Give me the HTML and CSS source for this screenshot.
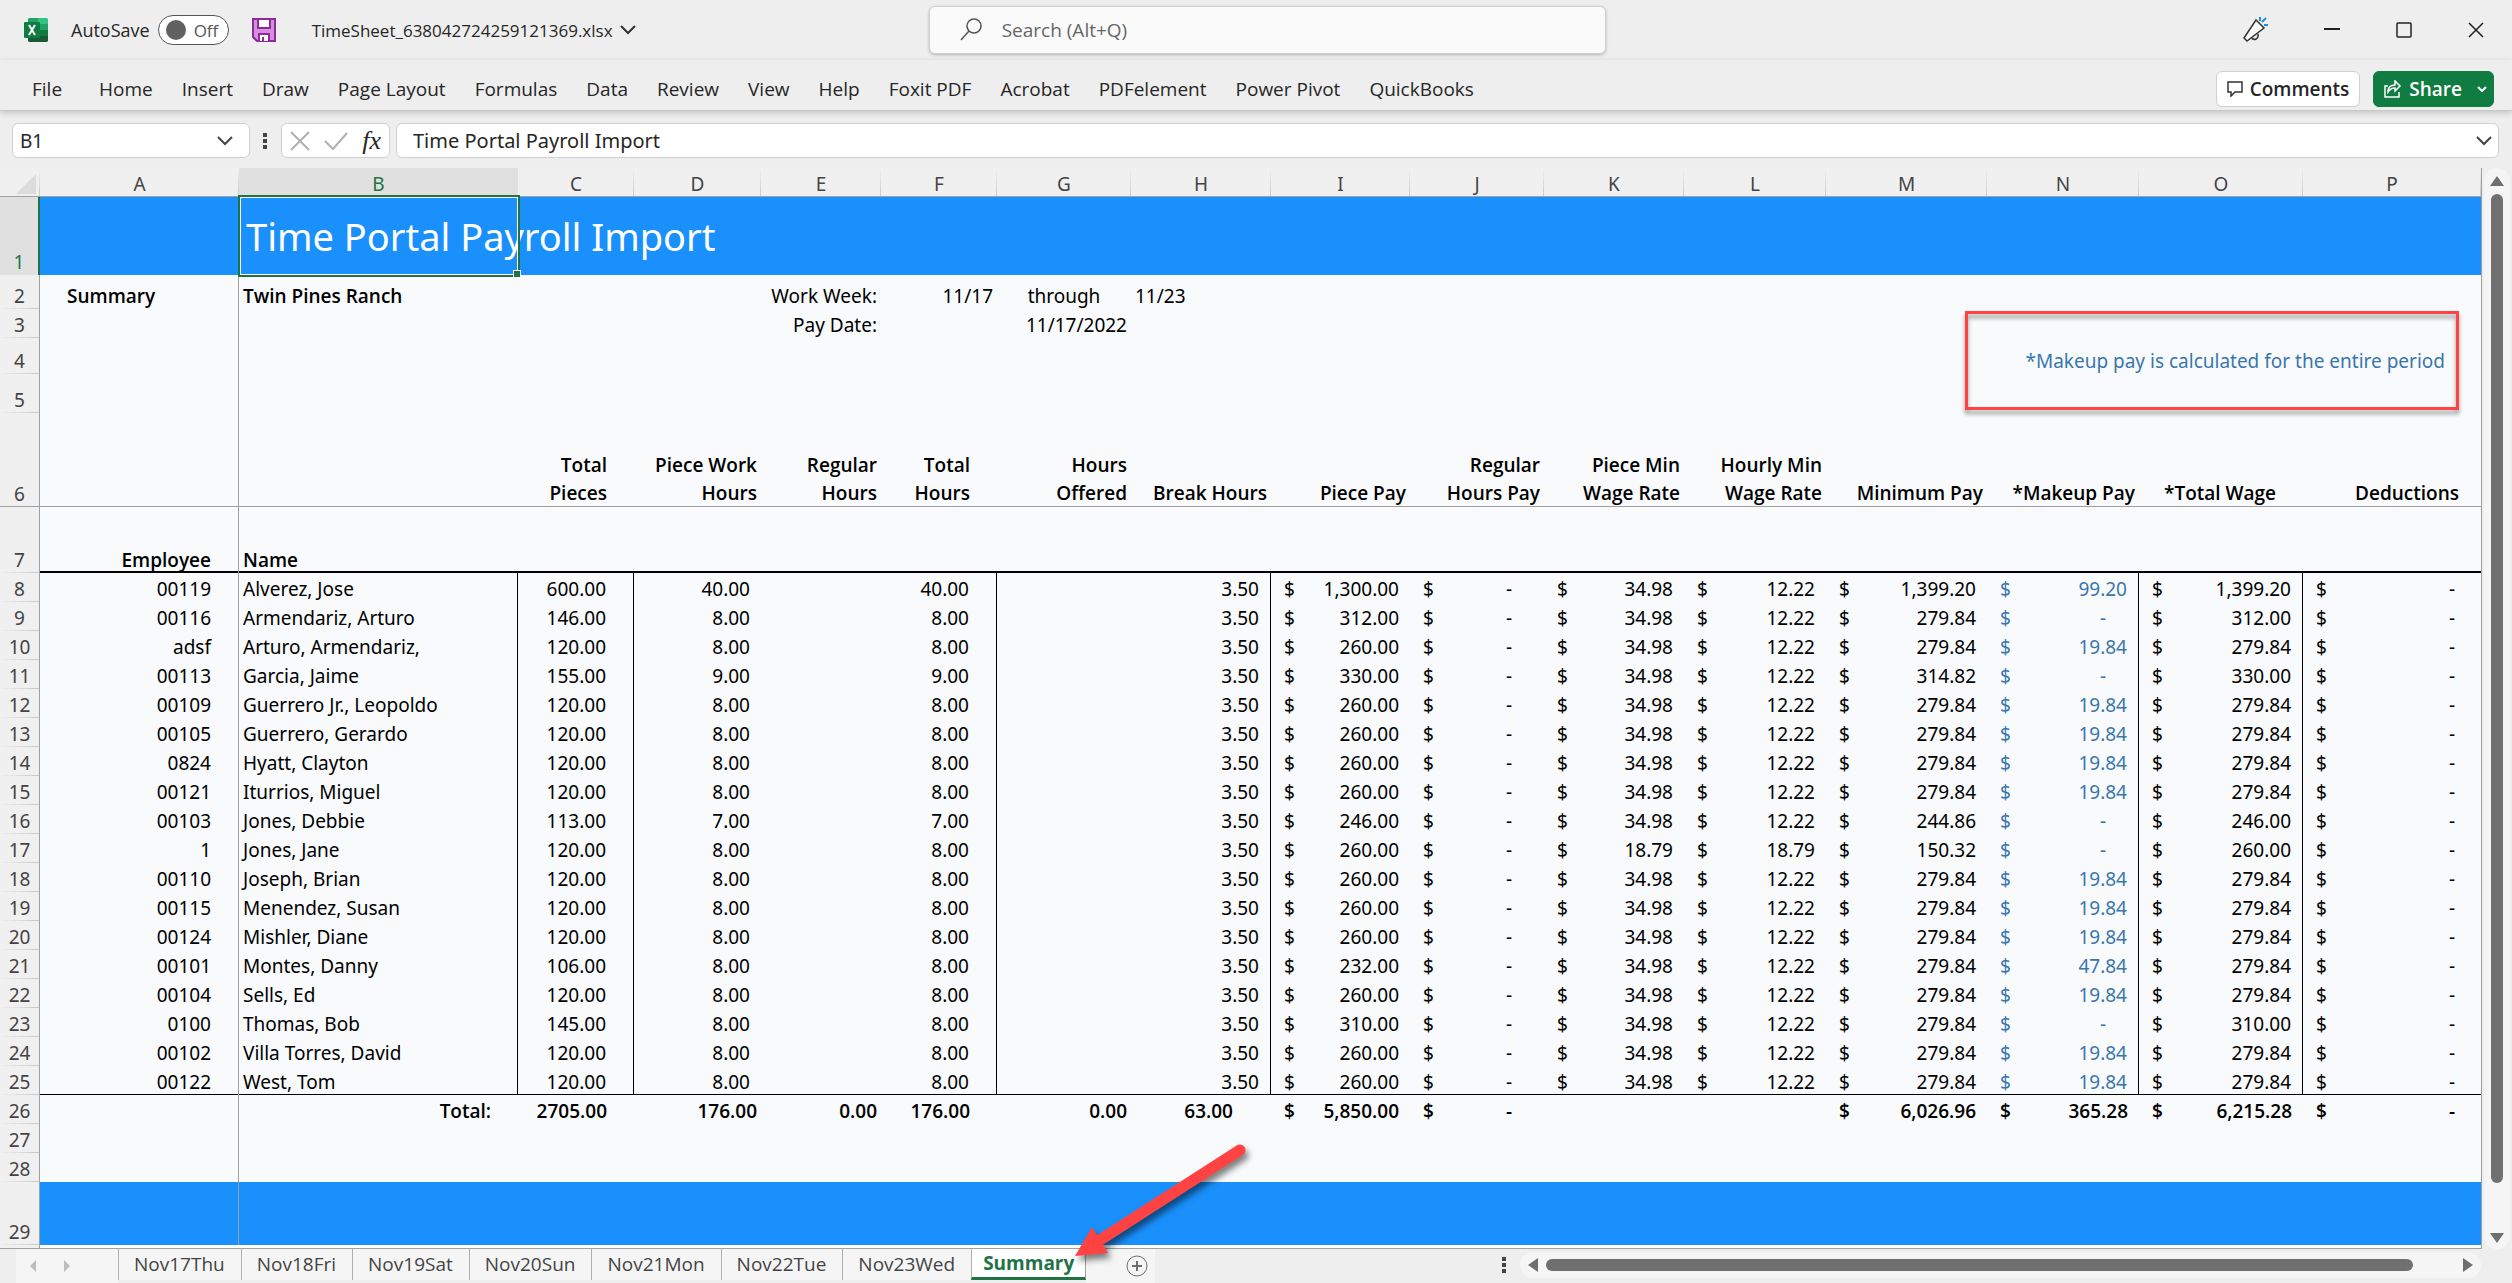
FILE: index.html
```html
<!DOCTYPE html>
<html lang="en">
<head>
    <meta charset="UTF-8">
    <title>TimeSheet_638042724259121369.xlsx</title>
    <meta name="viewport" content="width=device-width, initial-scale=1.0">
    <link rel="stylesheet" href="styles.css">
</head>
<body>

<header class="titlebar">
    <div class="title-left">
        <svg class="app-icon" width="24" height="24" viewBox="0 0 24 24" aria-hidden="true">
            <path fill="#21a366" d="M5 0h10v6H4V1z"/>
            <path fill="#33c481" d="M14 0h9l1 1v5H14z"/>
            <path fill="#107c41" d="M4 6h10v6H4z"/>
            <path fill="#21a366" d="M14 6h10v6H14z"/>
            <path fill="#185c37" d="M4 12h10v6h10v5l-1 1H5l-1-1z"/>
            <path fill="#107c41" d="M14 12h10v6H14z"/>
            <rect y="4" width="16" height="16" rx="1" fill="#107c41"/>
            <path stroke="#fff" stroke-width="2" d="M5 7l6 10M11 7L5 17"/>
        </svg>
        <label class="autosave">AutoSave
            <span class="toggle"><input type="checkbox"><span class="knob"></span>Off</span>
        </label>
        <button class="plain save" aria-label="Save">
            <svg width="24" height="24" viewBox="0 0 24 24" fill="none">
                <path fill="#d58fdd" stroke="#8e2a9b" stroke-width="2" d="M1 1h22v22H5l-4-4z"/>
                <path fill="#fff" stroke="#8e2a9b" stroke-width="2" d="M6 1h12v9H6zM7 23v-7h10v7"/>
                <path stroke="#8e2a9b" stroke-width="2" d="M11 19v4"/>
            </svg>
        </button>
        <button class="plain filename">TimeSheet_638042724259121369.xlsx
            <svg width="16" height="10" viewBox="0 0 16 10" fill="none" stroke="#333" stroke-width="2"><path d="M1 1l7 7 7-7"/></svg>
        </button>
    </div>
    <label class="search">
        <svg width="22" height="24" viewBox="0 0 22 24" fill="none" stroke="#555" stroke-width="1.500"><circle cx="14" cy="8" r="7"/><path d="M9 13l-8 9"/></svg>
        <input type="text" placeholder="Search (Alt+Q)" aria-label="Search">
    </label>
    <div class="window-buttons">
        <button class="plain" aria-label="Coming soon">
            <svg width="26" height="26" viewBox="0 0 26 26" fill="none" stroke="#333" stroke-width="1.500">
                <path fill="#fafafa" d="M14 3l8 8L5 24l-3-3z"/><path d="M10 21c2 3 7 1 6-4"/><path stroke="#1e8fd8" stroke-width="2" d="M18 4V0M20 5l4-4M22 8h4"/>
            </svg>
        </button>
        <button class="plain" aria-label="Minimize"><svg width="16" height="16" viewBox="0 0 16 16" stroke="#222" stroke-width="2"><path d="M0 7h16"/></svg></button>
        <button class="plain" aria-label="Maximize"><svg width="16" height="16" viewBox="0 0 16 16" fill="none" stroke="#222" stroke-width="1.500"><rect x="1" y="1" width="14" height="14" rx="1"/></svg></button>
        <button class="plain" aria-label="Close"><svg width="16" height="16" viewBox="0 0 16 16" stroke="#222" stroke-width="1.500"><path d="M1 1l14 14M15 1L1 15"/></svg></button>
    </div>
</header>

<nav class="ribbon">
    <a class="file" href="#">File</a>
    <a href="#">Home</a>
    <a href="#">Insert</a>
    <a href="#">Draw</a>
    <a href="#">Page Layout</a>
    <a href="#">Formulas</a>
    <a href="#">Data</a>
    <a href="#">Review</a>
    <a href="#">View</a>
    <a href="#">Help</a>
    <a href="#">Foxit PDF</a>
    <a href="#">Acrobat</a>
    <a href="#">PDFelement</a>
    <a href="#">Power Pivot</a>
    <a href="#">QuickBooks</a>
    <button class="comments">
        <svg width="16" height="16" viewBox="0 0 16 16" fill="none" stroke="#333" stroke-width="1.500"><path d="M1 1h14v10H8l-4 4v-4H1z"/></svg>
        Comments
    </button>
    <button class="share">
        <svg width="18" height="18" viewBox="0 0 18 18" fill="none" stroke="#fff" stroke-width="1.500"><path d="M4 6H1v11h14v-5M4 12c0-5 3-7 7-7V1l5 5-5 5V8c-3 0-5 1-7 4z"/></svg>
        Share
        <svg class="caret" width="10" height="6" viewBox="0 0 10 6" fill="none" stroke="#fff" stroke-width="2"><path d="M1 1l4 4 4-4"/></svg>
    </button>
</nav>

<div class="formula-bar">
    <div class="box name-box">
        <input type="text" value="B1" aria-label="Name box">
        <button class="plain" aria-label="Open name list"><svg width="16" height="10" viewBox="0 0 16 10" fill="none" stroke="#444" stroke-width="2"><path d="M1 1l7 7 7-7"/></svg></button>
    </div>
    <svg class="dots" width="4" height="16" viewBox="0 0 4 16" fill="#444"><path d="M0 0h4v4H0zM0 6h4v4H0zM0 12h4v4H0z"/></svg>
    <div class="box fx-box">
        <button class="plain" aria-label="Cancel"><svg width="20" height="20" viewBox="0 0 20 20" stroke="#b0b0b0" stroke-width="2"><path d="M1 1l18 18M19 1L1 19"/></svg></button>
        <button class="plain" aria-label="Enter"><svg width="24" height="18" viewBox="0 0 24 18" fill="none" stroke="#b0b0b0" stroke-width="2"><path d="M1 9l8 8L23 1"/></svg></button>
        <button class="plain fx" aria-label="Insert function">fx</button>
    </div>
    <div class="box formula-box">
        <input type="text" value="Time Portal Payroll Import" aria-label="Formula">
        <button class="plain" aria-label="Expand formula bar"><svg width="16" height="10" viewBox="0 0 16 10" fill="none" stroke="#444" stroke-width="2"><path d="M1 1l7 7 7-7"/></svg></button>
    </div>
</div>

<main class="workspace">
    <div class="sheet">
        <table>
            <colgroup>
                <col class="col-head"><col class="col-a"><col class="col-b"><col class="col-c"><col class="col-d"><col class="col-e"><col class="col-f"><col class="col-g"><col class="col-h"><col class="col-i"><col class="col-j"><col class="col-k"><col class="col-l"><col class="col-m"><col class="col-n"><col class="col-o"><col class="col-p">
            </colgroup>
            <thead>
                <tr>
                    <th class="corner"><svg width="20" height="20" viewBox="0 0 20 20" fill="#dcdcdc"><path d="M20 0v20H0z"/></svg></th>
                    <th>A</th><th class="picked">B</th><th>C</th><th>D</th><th>E</th><th>F</th><th>G</th><th>H</th><th>I</th><th>J</th><th>K</th><th>L</th><th>M</th><th>N</th><th>O</th><th>P</th>
                </tr>
            </thead>
            <tbody>
                <tr class="banner">
                    <th class="picked">1</th>
                    <td class="a"></td>
                    <td class="title">Time Portal Payroll Import<span class="selection"></span></td>
                    <td colspan="14"></td>
                </tr>
                <tr class="row-2">
                    <th>2</th>
                    <td class="a bold indent">Summary</td>
                    <td class="text bold">Twin Pines Ranch</td>
                    <td></td><td></td>
                    <td>Work Week:</td>
                    <td>11/17</td>
                    <td class="center">through</td>
                    <td class="text">11/23</td>
                    <td colspan="8"></td>
                </tr>
                <tr>
                    <th>3</th>
                    <td class="a"></td><td></td><td></td><td></td>
                    <td>Pay Date:</td>
                    <td></td>
                    <td>11/17/2022</td>
                    <td colspan="9"></td>
                </tr>
                <tr class="row-4">
                    <th>4</th>
                    <td class="a"></td>
                    <td colspan="12"></td>
                    <td colspan="3" class="note">*Makeup pay is calculated for the entire period<span class="callout"></span></td>
                </tr>
                <tr class="row-5"><th>5</th><td class="a"></td><td colspan="15"></td></tr>
                <tr class="row-6 bold">
                    <th>6</th>
                    <td class="a"></td><td></td>
                    <td class="wide">Total<br>Pieces</td>
                    <td>Piece Work<br>Hours</td>
                    <td>Regular<br>Hours</td>
                    <td class="wide">Total<br>Hours</td>
                    <td>Hours<br>Offered</td>
                    <td>Break Hours</td>
                    <td>Piece Pay</td>
                    <td>Regular<br>Hours Pay</td>
                    <td>Piece Min<br>Wage Rate</td>
                    <td>Hourly Min<br>Wage Rate</td>
                    <td>Minimum Pay</td>
                    <td>*Makeup Pay</td>
                    <td class="wide">*Total Wage</td>
                    <td class="last">Deductions</td>
                </tr>
                <tr class="row-7 bold">
                    <th>7</th>
                    <td class="a wide">Employee</td>
                    <td class="text">Name</td>
                    <td colspan="14"></td>
                </tr>
            </tbody>
            <tbody id="employees"></tbody>
            <tbody>
                <tr class="bold">
                    <th>26</th>
                    <td class="a"></td>
                    <td class="wide">Total:</td>
                    <td class="wide">2705.00</td>
                    <td>176.00</td>
                    <td>0.00</td>
                    <td class="wide">176.00</td>
                    <td>0.00</td>
                    <td class="breaks">63.00</td>
                    <td class="money"><span>$</span>5,850.00</td>
                    <td class="money dash"><span>$</span>-</td>
                    <td></td><td></td>
                    <td class="money"><span>$</span>6,026.96</td>
                    <td class="money"><span>$</span>365.28</td>
                    <td class="money"><span>$</span>6,215.28</td>
                    <td class="money last"><span>$</span>-</td>
                </tr>
                <tr><th>27</th><td class="a"></td><td colspan="15"></td></tr>
                <tr><th>28</th><td class="a"></td><td colspan="15"></td></tr>
                <tr class="banner footer"><th>29</th><td class="a"></td><td colspan="15"></td></tr>
            </tbody>
        </table>
    </div>
    <div class="scroll-v">
        <svg width="14" height="10" viewBox="0 0 14 10" fill="#6e6e6e"><path d="M7 0l7 10H0z"/></svg>
        <div class="thumb"></div>
        <svg width="14" height="10" viewBox="0 0 14 10" fill="#6e6e6e"><path d="M0 0h14L7 10z"/></svg>
    </div>
</main>

<footer class="tabbar">
    <div class="tab-nav">
        <button class="plain" aria-label="Previous sheet"><svg width="6" height="12" viewBox="0 0 6 12" fill="#bdbdbd"><path d="M6 0v12L0 6z"/></svg></button>
        <button class="plain" aria-label="Next sheet"><svg width="6" height="12" viewBox="0 0 6 12" fill="#bdbdbd"><path d="M0 0v12l6-6z"/></svg></button>
    </div>
    <button class="tab">Nov17Thu</button>
    <button class="tab">Nov18Fri</button>
    <button class="tab">Nov19Sat</button>
    <button class="tab">Nov20Sun</button>
    <button class="tab">Nov21Mon</button>
    <button class="tab">Nov22Tue</button>
    <button class="tab">Nov23Wed</button>
    <button class="tab active">Summary</button>
    <button class="plain add-sheet" aria-label="New sheet">
        <svg width="24" height="24" viewBox="0 0 24 24" fill="none" stroke="#6e6e6e"><circle cx="12" cy="12" r="10"/><path stroke-width="2" d="M7 12h10M12 7v10"/></svg>
    </button>
    <svg class="dots" width="4" height="16" viewBox="0 0 4 16" fill="#444"><path d="M0 0h4v4H0zM0 6h4v4H0zM0 12h4v4H0z"/></svg>
    <div class="scroll-h">
        <svg width="10" height="14" viewBox="0 0 10 14" fill="#6e6e6e"><path d="M10 0v14L0 7z"/></svg>
        <div class="thumb"></div>
        <svg width="10" height="14" viewBox="0 0 10 14" fill="#6e6e6e"><path d="M0 0v14l10-7z"/></svg>
    </div>
    <svg class="arrow" width="190" height="130" viewBox="0 0 190 130">
        <path fill="#ff4343" d="M5 123l17-29 16 26z"/>
        <path stroke="#ff4343" stroke-width="11" stroke-linecap="round" d="M30 107l140-90"/>
    </svg>
</footer>

<script>
// id, name, pieces, hours, piece pay, piece min, hourly min, minimum pay, makeup, total wage
const employees = [
    ["00119", "Alverez, Jose", "600.00", "40.00", "1,300.00", "34.98", "12.22", "1,399.20", "99.20", "1,399.20"],
    ["00116", "Armendariz, Arturo", "146.00", "8.00", "312.00", "34.98", "12.22", "279.84", "-", "312.00"],
    ["adsf", "Arturo, Armendariz,", "120.00", "8.00", "260.00", "34.98", "12.22", "279.84", "19.84", "279.84"],
    ["00113", "Garcia, Jaime", "155.00", "9.00", "330.00", "34.98", "12.22", "314.82", "-", "330.00"],
    ["00109", "Guerrero Jr., Leopoldo", "120.00", "8.00", "260.00", "34.98", "12.22", "279.84", "19.84", "279.84"],
    ["00105", "Guerrero, Gerardo", "120.00", "8.00", "260.00", "34.98", "12.22", "279.84", "19.84", "279.84"],
    ["0824", "Hyatt, Clayton", "120.00", "8.00", "260.00", "34.98", "12.22", "279.84", "19.84", "279.84"],
    ["00121", "Iturrios, Miguel", "120.00", "8.00", "260.00", "34.98", "12.22", "279.84", "19.84", "279.84"],
    ["00103", "Jones, Debbie", "113.00", "7.00", "246.00", "34.98", "12.22", "244.86", "-", "246.00"],
    ["1", "Jones, Jane", "120.00", "8.00", "260.00", "18.79", "18.79", "150.32", "-", "260.00"],
    ["00110", "Joseph, Brian", "120.00", "8.00", "260.00", "34.98", "12.22", "279.84", "19.84", "279.84"],
    ["00115", "Menendez, Susan", "120.00", "8.00", "260.00", "34.98", "12.22", "279.84", "19.84", "279.84"],
    ["00124", "Mishler, Diane", "120.00", "8.00", "260.00", "34.98", "12.22", "279.84", "19.84", "279.84"],
    ["00101", "Montes, Danny", "106.00", "8.00", "232.00", "34.98", "12.22", "279.84", "47.84", "279.84"],
    ["00104", "Sells, Ed", "120.00", "8.00", "260.00", "34.98", "12.22", "279.84", "19.84", "279.84"],
    ["0100", "Thomas, Bob", "145.00", "8.00", "310.00", "34.98", "12.22", "279.84", "-", "310.00"],
    ["00102", "Villa Torres, David", "120.00", "8.00", "260.00", "34.98", "12.22", "279.84", "19.84", "279.84"],
    ["00122", "West, Tom", "120.00", "8.00", "260.00", "34.98", "12.22", "279.84", "19.84", "279.84"]
];

function money(value, extra = "") {
    const dash = value === "-" ? "dash" : "";
    return `<td class="money ${dash} ${extra}"><span>$</span>${value}</td>`;
}

document.getElementById("employees").innerHTML = employees.map((e, i) => `
    <tr>
        <th>${i + 8}</th>
        <td class="a wide">${e[0]}</td>
        <td class="text line">${e[1]}</td>
        <td class="wide line">${e[2]}</td>
        <td class="num">${e[3]}</td>
        <td></td>
        <td class="wide line">${e[3]}</td>
        <td></td>
        <td class="num line">3.50</td>
        ${money(e[4])}
        ${money("-")}
        ${money(e[5])}
        ${money(e[6])}
        ${money(e[7])}
        ${money(e[8], "makeup line")}
        ${money(e[9], "line")}
        ${money("-", "last")}
    </tr>`).join("");
</script>

</body>
</html>
```

FILE: styles.css
```css
* {
    box-sizing: border-box;
}

body {
    margin: 0;
    height: 100vh;
    display: flex;
    flex-direction: column;
    overflow: hidden;
    background: #eeeeee;
    color: #262626;
    font-family: 'Open Sans', 'Noto Sans', sans-serif;
    font-size: 19px;
}

button, input {
    font: inherit;
    color: inherit;
}

svg {
    flex: none;
    display: block;
}

.plain {
    display: flex;
    align-items: center;
    padding: 0;
    border: none;
    background: none;
}

/* title bar */
.titlebar {
    display: grid;
    grid-template-columns: 103fr 677px 100fr;
    align-items: center;
    height: 60px;
    padding: 0 28px 0 24px;
}

.title-left {
    display: flex;
    align-items: center;
}

.autosave {
    display: flex;
    align-items: center;
    gap: 8px;
    margin-left: 23px;
    font-size: 18px;
}

.toggle {
    display: flex;
    align-items: center;
    gap: 8px;
    width: 71px;
    height: 30px;
    padding-left: 7px;
    border: 1px solid #555;
    border-radius: 15px;
    background: #fff;
    color: #555;
    font-size: 17px;
}

.toggle input {
    position: absolute;
    opacity: 0;
}

.knob {
    width: 20px;
    height: 20px;
    border-radius: 50%;
    background: #616161;
}

.save {
    margin: 0 36px 0 23px;
}

.filename {
    gap: 7px;
    font-size: 17px;
}

.search {
    display: flex;
    align-items: center;
    gap: 20px;
    height: 48px;
    padding: 0 30px;
    border: 1px solid #d0d0d0;
    border-radius: 6px;
    background: #fafafa;
    box-shadow: 0 1px 3px rgba(0, 0, 0, 0.25);
}

.search input {
    flex: 1;
    border: none;
    background: none;
    padding: 0;
}

.search input::placeholder {
    color: #666;
    opacity: 1;
}

.window-buttons {
    display: flex;
    align-items: center;
    justify-content: flex-end;
    gap: 56px;
}

/* ribbon */
.ribbon {
    display: flex;
    align-items: center;
    gap: 29px;
    height: 51px;
    padding: 7px 18px 0 32px;
    border-bottom: 1px solid #c8c8c8;
    box-shadow: 0 2px 6px rgba(0, 0, 0, 0.18);
}

.ribbon a {
    color: #262626;
    text-decoration: none;
    white-space: nowrap;
}

.ribbon .file {
    margin-right: 8px;
}

.comments, .share {
    display: flex;
    align-items: center;
    gap: 7px;
    height: 36px;
    padding: 0 10px;
    border: 1px solid #d0d0d0;
    border-radius: 6px;
    background: #fff;
    font-weight: 600;
}

.comments {
    margin-left: auto;
}

.share {
    margin-left: -16px;
    padding: 0 6px 0 10px;
    border-color: #107c41;
    background: #107c41;
    color: #fff;
}

.caret {
    margin-left: 8px;
}

/* formula bar */
.formula-bar {
    display: flex;
    align-items: center;
    height: 57px;
    padding: 2px 13px 0 12px;
}

.box {
    display: flex;
    align-items: center;
    height: 35px;
    border: 1px solid #d0d0d0;
    border-radius: 6px;
    background: #fff;
}

.box input {
    flex: 1;
    min-width: 0;
    padding: 0;
    border: none;
    background: none;
    font-family: 'Noto Sans', sans-serif;
}

.formula-box input {
    font-size: 20px;
}

.name-box {
    width: 238px;
    padding: 0 16px 0 7px;
}

.formula-bar .dots {
    margin: 0 14px 0 13px;
}

.fx-box {
    width: 109px;
    justify-content: space-between;
    padding: 0 8px;
    margin-right: 6px;
}

.fx {
    font-family: 'Liberation Serif', serif;
    font-style: italic;
    font-size: 26px;
    line-height: 28px;
}

.formula-box {
    flex: 1;
    padding: 0 6px 0 16px;
}

/* grid */
.workspace {
    flex: 1;
    min-height: 0;
    display: flex;
}

.sheet {
    flex: 1;
    overflow: hidden;
    background: linear-gradient(to right, #f0f0f0 39px, #a0a0a0 39px, #a0a0a0 40px, #fff 40px);
    border-right: 1px solid #a0a0a0;
    border-bottom: 1px solid #a0a0a0;
}

table {
    width: 100%;
    table-layout: fixed;
    border-collapse: separate;
    border-spacing: 0;
    font-family: 'Noto Sans', sans-serif;
    line-height: 25px;
}

.col-head { width: 40px; }
.col-a { width: 199px; }
.col-b { width: 279px; }
.col-c { width: 116px; }
.col-d { width: 127px; }
.col-e { width: 120px; }
.col-f { width: 116px; }
.col-g { width: 134px; }
.col-h { width: 140px; }
.col-i { width: 139px; }
.col-j { width: 134px; }
.col-k { width: 140px; }
.col-l { width: 142px; }
.col-m { width: 161px; }
.col-n { width: 152px; }
.col-o { width: 164px; }
.col-p { width: 178px; }

th {
    padding: 0;
    height: 29px;
    color: #444;
    font-weight: normal;
}

thead th {
    padding-top: 3px;
    background: linear-gradient(#f0f0f0, #c8c8c8) right / 1px 100% no-repeat #f0f0f0;
    box-shadow: inset 0 -1px #a0a0a0;
}

thead .picked {
    background: #e0e0e0;
    color: #217346;
}

.corner svg {
    margin-left: 16px;
}

tbody th {
    vertical-align: bottom;
    border-right: 1px solid #a0a0a0;
    background: linear-gradient(to right, #f0f0f0, #c8c8c8) bottom / 100% 1px no-repeat #f0f0f0;
}

tbody .picked {
    border-right: 2px solid #217346;
    background: #e0e0e0;
    color: #217346;
}

td {
    height: 29px;
    padding: 0 4px;
    background: #f8fafc;
    color: #000;
    text-align: right;
    vertical-align: bottom;
    white-space: nowrap;
}

.bold td, td.bold {
    font-family: 'Open Sans', sans-serif;
    font-weight: 600;
}

.text { text-align: left; }
.center { text-align: center; }
.wide { padding-right: 27px; }
.num { padding-right: 11px; }
.breaks { padding-right: 38px; }
.last { padding-right: 22px; }

/* edge of the frozen panes */
td.a {
    border-right: 1px solid #a0a0a0;
}

.indent {
    padding-left: 27px;
    text-align: left;
}

.line {
    border-right: 1px solid #000;
}

.money {
    padding-left: 13px;
    padding-right: 11px;
}

.money span {
    float: left;
}

.dash {
    padding-right: 32px;
}

.money.last {
    padding-right: 26px;
}

.makeup, .note {
    color: #3a76ae;
}

.banner td {
    height: 78px;
    background: #1a90fc;
}

.banner .title {
    position: relative;
    padding: 1px 0 0 7px;
    color: #fff;
    font-size: 38px;
    line-height: 77px;
    text-align: left;
}

.selection {
    position: absolute;
    inset: -2px -2px -2px -1px;
    border: 2px solid #217346;
    box-shadow: inset 0 0 0 1px #fff;
}

.selection::after {
    content: "";
    position: absolute;
    right: -3px;
    bottom: -3px;
    width: 6px;
    height: 6px;
    border: 1px solid #fff;
    background: #217346;
    box-sizing: content-box;
}

.row-2 td { height: 34px; }
.row-4 td { height: 36px; }
.row-5 td { height: 39px; }
.row-6 td { height: 94px; line-height: 28px; }
.row-7 td { height: 66px; }
.banner.footer td { height: 63px; }

.row-6 td, .row-6 th {
    box-shadow: inset 0 -1px #a0a0a0;
}

.row-7 td {
    box-shadow: inset 0 -2px #000;
}

#employees tr:last-child td {
    box-shadow: inset 0 -1px #000;
}

.note {
    position: relative;
    padding-right: 36px;
}

.callout {
    position: absolute;
    top: -27px;
    right: 22px;
    width: 494px;
    height: 99px;
    border: 3px solid #ff4343;
    filter: drop-shadow(0 4px 2px rgba(0, 0, 0, 0.4));
}

/* scrollbars */
.scroll-v {
    display: flex;
    flex-direction: column;
    align-items: center;
    gap: 8px;
    width: 26px;
    margin: 0 2px;
    padding: 8px 0 6px;
    border-radius: 13px;
    background: #f5f5f5;
}

.scroll-v .thumb {
    flex: 1;
    width: 12px;
    margin-bottom: 42px;
    border-radius: 6px;
    background: #707070;
}

.scroll-h {
    display: flex;
    align-items: center;
    gap: 8px;
    width: 39%;
    height: 26px;
    margin-top: 3px;
    padding: 0 8px;
    border-radius: 13px;
    background: #f5f5f5;
}

.scroll-h .thumb {
    flex: 1;
    height: 12px;
    margin-right: 42px;
    border-radius: 6px;
    background: #707070;
}

/* sheet tabs */
.tabbar {
    position: relative;
    display: flex;
    align-items: flex-start;
    height: 34px;
    padding: 0 31px 0 16px;
}

.tab-nav {
    display: flex;
    gap: 28px;
    width: 102px;
    height: 34px;
    padding-left: 14px;
    background: #f5f5f5;
}

.tab {
    height: 31px;
    padding: 0 16px 0 15px;
    border: none;
    border-left: 1px solid #b0b0b0;
    background: #f5f5f5;
    color: #444;
    line-height: 29px;
}

.tab.active {
    padding: 0 11px;
    border-right: 1px solid #a0a0a0;
    border-bottom: 3px solid #217346;
    background: #fff;
    color: #217346;
    font-weight: bold;
}

.add-sheet {
    width: 69px;
    height: 34px;
    padding-left: 39px;
    background: #f5f5f5;
}

.tabbar .dots {
    margin: 8px 14px 0 auto;
}

.arrow {
    position: absolute;
    left: 1070px;
    bottom: 20px;
    fill: none;
    filter: drop-shadow(3px 5px 3px rgba(0, 0, 0, 0.5));
}
```
